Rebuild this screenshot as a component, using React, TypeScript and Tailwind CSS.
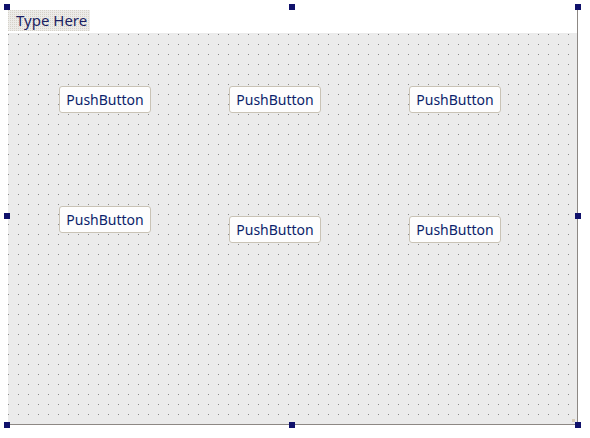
import React from 'react';

interface Btn {
  x: number;
  y: number;
}

// widget places on the designer canvas (relative to the form's grid area)
const buttons: Btn[] = [
  { x: 51, y: 53 },
  { x: 221, y: 53 },
  { x: 401, y: 53 },
  { x: 51, y: 173 },
  { x: 221, y: 183 },
  { x: 401, y: 183 },
];

const handles = [
  'left-[4px] top-[4px]',
  'left-[289px] top-[4px]',
  'left-[575px] top-[4px]',
  'left-[4px] top-[213px]',
  'left-[575px] top-[213px]',
  'left-[4px] top-[422px]',
  'left-[289px] top-[422px]',
  'left-[575px] top-[422px]',
];

const PushButton: React.FC<Btn> = ({ x, y }) => (
  <div
    className="absolute w-[92px] h-[27px] flex items-center justify-center rounded-[3px] border border-[#c9c3b6] bg-[#fdfdfd] text-[14px] text-[#0b1f6b]"
    style={{ left: x, top: y }}
  >
    PushButton
  </div>
);

const App: React.FC = () => {
  return (
    <div
      className="relative w-[590px] h-[438px] bg-white overflow-hidden"
      style={{ fontFamily: '"Noto Sans", "Open Sans", sans-serif' }}
    >
      <div className="pl-[8px] pt-[10px]">
        <div className="w-[570px] h-[415px] flex flex-col border-r border-b border-[#8d8884]">
          {/* Menu bar */}
          <div className="h-[23px] bg-white">
            <div className="w-[82px] h-[21px] flex items-center pl-[8px] text-[15px] text-[#1b1f63] bg-[#ecebe8] bg-[conic-gradient(at_1px_1px,transparent_75%,#d6d2ca_0)] bg-[size:2px_2px]">
              Type Here
            </div>
          </div>

          {/* Form grid */}
          <div className="relative flex-1 bg-[#ebebeb] bg-[conic-gradient(at_1px_1px,transparent_75%,#8a8a8a_0)] bg-[size:10px_10px] bg-[position:0px_1px]">
            {buttons.map((b, i) => (
              <PushButton key={i} x={b.x} y={b.y} />
            ))}
            <div className="absolute right-[2px] bottom-[2px] w-[3px] h-[3px] bg-[#d6cbb8]" />
          </div>
        </div>
      </div>

      {handles.map((h) => (
        <div key={h} className={`absolute w-[6px] h-[6px] bg-[#10116b] ${h}`} />
      ))}
    </div>
  );
};

export default App;
